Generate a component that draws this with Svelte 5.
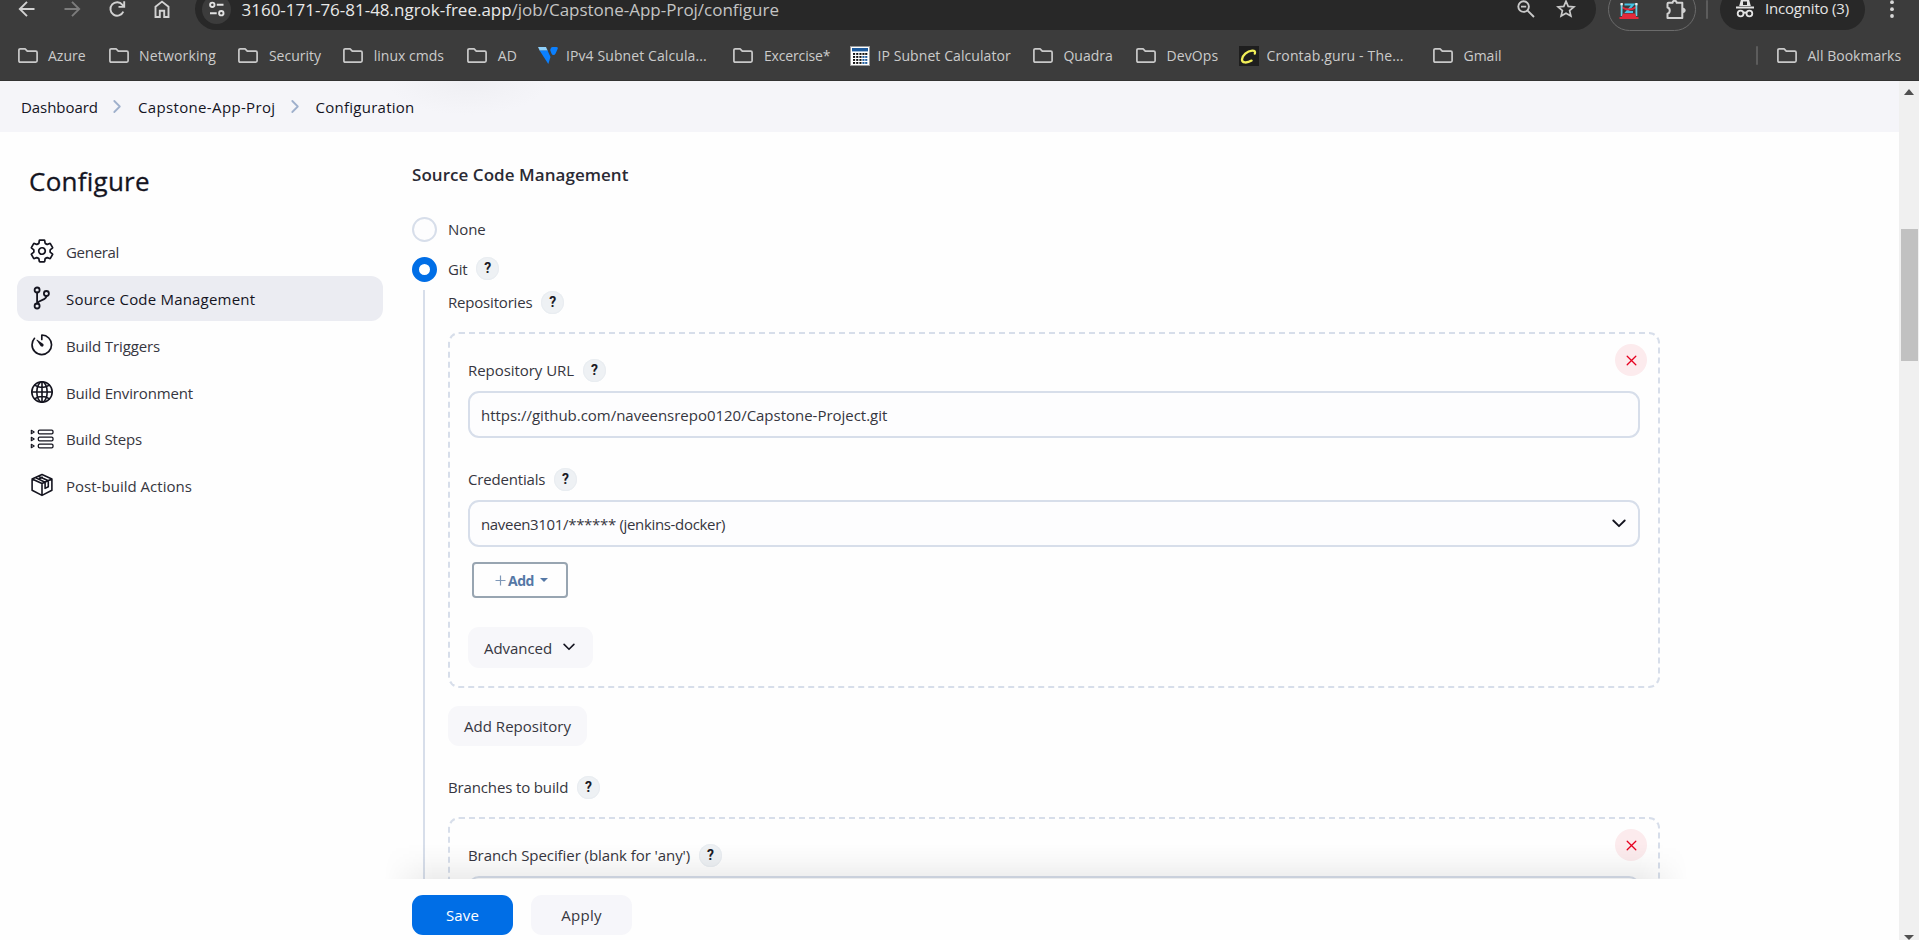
<script>
  const bookmarks = [
    { label: 'Azure', icon: 'folder', width: 91.1, spacing: 0 },
    { label: 'Networking', icon: 'folder', width: 129.8, spacing: 0.15 },
    { label: 'Security', icon: 'folder', width: 104.9, spacing: 0 },
    { label: 'linux cmds', icon: 'folder', width: 124, spacing: 0 },
    { label: 'AD', icon: 'folder', width: 71.2, spacing: 0 },
    { label: 'IPv4 Subnet Calcula...', icon: 'vercara', width: 195, spacing: 0.1, gap: 7.5 },
    { label: 'Excercise*', icon: 'folder', width: 116.5, spacing: -0.15 },
    { label: 'IP Subnet Calculator', icon: 'calculator', width: 183, spacing: 0.08, gap: 7.5 },
    { label: 'Quadra', icon: 'folder', width: 103, spacing: 0 },
    { label: 'DevOps', icon: 'folder', width: 103, spacing: 0.1 },
    { label: 'Crontab.guru - The...', icon: 'crontab', width: 194, spacing: 0.15, gap: 7.5 },
    { label: 'Gmail', icon: 'folder', width: 80, spacing: 0 }
  ];

  const sections = [
    { label: 'General', icon: 'gear', spacing: -0.3 },
    { label: 'Source Code Management', icon: 'branch', spacing: 0.2, active: true },
    { label: 'Build Triggers', icon: 'timer', spacing: -0.12 },
    { label: 'Build Environment', icon: 'globe', spacing: -0.15 },
    { label: 'Build Steps', icon: 'steps', spacing: -0.17 },
    { label: 'Post-build Actions', icon: 'package', spacing: 0.02 }
  ];

  const crumbs = [
    { label: 'Dashboard', spacing: -0.05 },
    { label: 'Capstone-App-Proj', spacing: 0.35 },
    { label: 'Configuration', spacing: 0.26 }
  ];

  let scm = $state('git');
</script>

{#snippet label(text, spacing)}
  <span class="label" style:letter-spacing="{spacing}px">{text}</span>
{/snippet}

{#snippet field(text, spacing)}
  <div class="field-label">
    {@render label(text, spacing)}
    <button class="help">?</button>
  </div>
{/snippet}

{#snippet chevron(w, h)}
  <svg width={w} height={h} viewBox="0 0 13 8" fill="none" stroke="#14141f" stroke-width="1.7" stroke-linecap="round" stroke-linejoin="round"><path d="M1.2 1.2 6.5 6.5l5.3-5.3" /></svg>
{/snippet}

{#snippet remove()}
  <button class="remove" aria-label="Delete">
    <svg width="11" height="11" viewBox="0 0 11 11" fill="none" stroke="#e6001f" stroke-width="1.3" stroke-linecap="round"><path d="M1.2 1.2l8.6 8.6M9.8 1.2 1.2 9.8" /></svg>
  </button>
{/snippet}

{#snippet bookmarkIcon(kind)}
  {#if kind === 'folder'}
    <svg width="20" height="15" viewBox="0 0 20 15" fill="none" stroke="#c9c9c9" stroke-width="1.7" stroke-linejoin="round"><path d="M.9 2.2q0-1.3 1.3-1.3h4.9l2.2 2.3h8.5q1.3 0 1.3 1.3v8.3q0 1.3-1.3 1.3H2.2q-1.3 0-1.3-1.3z" /></svg>
  {:else if kind === 'vercara'}
    <svg width="20" height="19" viewBox="0 0 20 19"><path fill="#8ed0fb" d="M0 1h8l1.7 3.8H1.8z" /><path fill="#0b80ff" d="M1.6 4.4h8l2.9 6.6-2.2 7z" /><path fill="#0b80ff" d="M12.7 2.4Q13.3 1 14.8 1h3.4q2.2 0 1.4 2l-2 4.5q-.8 1.6-2.2 1.6-1.2 0-1.8-1.3l-1.2-3q-.3-1.2.3-2.4z" /></svg>
  {:else if kind === 'calculator'}
    <svg width="20" height="20" viewBox="0 0 20 20">
      <rect width="20" height="20" fill="#989898" /><rect x="1" y="1" width="18" height="18" fill="#fff" />
      <rect x="2" y="2" width="16" height="3.4" fill="#1d5a9c" />
      {#each [7, 10, 13, 16] as y}
        {#each [3, 6.2, 9.4, 12.4, 15.2] as x}<rect {x} {y} width="2.1" height="1.9" fill={x > 12 && y > 7 ? '#1d5a9c' : '#111'} />{/each}
      {/each}
    </svg>
  {:else}
    <svg width="20" height="20" viewBox="0 0 20 20"><rect width="20" height="20" fill="#1e1e1e" /><path d="M15.8 7.6q1.1-3.2-2.6-3C8 5 3.4 9.5 3 13.4c-.3 3.8 5 4 9.6 1.2" fill="none" stroke="#f2ef58" stroke-width="2.3" stroke-linecap="round" /></svg>
  {/if}
{/snippet}

{#snippet sectionIcon(kind)}
  {#if kind === 'gear'}
    <svg width="24" height="24" viewBox="20 20 472 472" class="line" stroke-width="34"><path d="M262.29 192.31a64 64 0 1057.4 57.4 64.13 64.13 0 00-57.4-57.4zM416.39 256a154.34 154.34 0 01-1.53 20.79l45.21 35.46a10.81 10.81 0 012.45 13.75l-42.77 74a10.81 10.81 0 01-13.14 4.59l-44.9-18.08a16.11 16.11 0 00-15.17 1.75A164.48 164.48 0 01325 400.8a15.94 15.94 0 00-8.82 12.14l-6.73 47.89a11.08 11.08 0 01-10.68 9.17h-85.54a11.11 11.11 0 01-10.69-8.87l-6.72-47.82a16.07 16.07 0 00-9-12.22 155.3 155.3 0 01-21.46-12.57 16 16 0 00-15.11-1.71l-44.89 18.07a10.81 10.81 0 01-13.14-4.58l-42.77-74a10.8 10.8 0 012.45-13.75l38.21-30a16.05 16.05 0 006-14.08c-.36-4.17-.58-8.33-.58-12.5s.21-8.27.58-12.35a16 16 0 00-6.07-13.94l-38.19-30A10.81 10.81 0 0149.48 186l42.77-74a10.81 10.81 0 0113.14-4.59l44.9 18.08a16.11 16.11 0 0015.17-1.75A164.48 164.48 0 01187 111.2a15.94 15.94 0 008.82-12.14l6.73-47.89A11.08 11.08 0 01213.23 42h85.54a11.11 11.11 0 0110.69 8.87l6.72 47.82a16.07 16.07 0 009 12.22 155.3 155.3 0 0121.46 12.57 16 16 0 0015.11 1.71l44.89-18.07a10.81 10.81 0 0113.14 4.58l42.77 74a10.8 10.8 0 01-2.45 13.75l-38.21 30a16.05 16.05 0 00-6.05 14.08c.33 4.14.55 8.3.55 12.47z" /></svg>
  {:else if kind === 'branch'}
    <svg width="24" height="24" viewBox="0 0 24 24" class="line" stroke-width="1.8"><circle cx="7.1" cy="4" r="2.5" /><circle cx="7.1" cy="20" r="2.5" /><circle cx="16.400" cy="7.5" r="2.5" /><path d="M7.1 6.500v11M16.400 10c0 4.500-7.300 3.500-9.100 7.300" /></svg>
  {:else if kind === 'timer'}
    <svg width="24" height="24" viewBox="24 24 472 472"><path class="line" stroke-width="33" d="M112.91 128A191.85 191.85 0 0064 254c-1.18 106.35 85.65 193.8 192 194 106.2.2 192-85.83 192-192 0-104.54-83.55-189.61-187.5-192a4.36 4.36 0 00-4.5 4.37V152" /><path fill="#14141f" d="M233.38 278.63l-79-113a8.13 8.13 0 0111.32-11.32l113 79a32.5 32.5 0 01-37.25 53.26 33.21 33.21 0 01-8.07-7.94z" /></svg>
  {:else if kind === 'globe'}
    <svg width="24" height="24" viewBox="0 0 24 24" class="line" stroke-width="1.6"><circle cx="12" cy="12" r="10.2" /><ellipse cx="12" cy="12" rx="5.2" ry="10.2" /><path d="M12 1.8v20.4M1.8 12h20.4M4.6 5.2c4.3 3 10.5 3 14.8 0M4.6 18.8c4.3-3 10.5-3 14.8 0" /></svg>
  {:else if kind === 'steps'}
    <svg width="24" height="24" viewBox="0 0 24 24" class="line" stroke-width="1.3">
      {#each [5, 12, 19] as y}
        <rect x="8.3" y={y - 1.8} width="14.7" height="3.6" rx="1.3" /><path d="M1.3 {y - 1.7}v3.4l2.9-1.7z" stroke-width="1.1" />
      {/each}
    </svg>
  {:else}
    <svg width="24" height="24" viewBox="0 0 24 24" class="line" stroke-width="1.6"><path d="M12 1.6 21.9 6v11.3L12 22.400l-9.900-5.100V6zM2.100 6 12 10.600 21.900 6M12 10.600v11.600M5.300 4.600l9.800 4.700v6.100l3.200-1.600V7.700L8.600 3.200M9.300 5.800l3-1.500" /></svg>
  {/if}
{/snippet}

<div class="window">
  <header class="chrome">
    <div class="toolbar">
      <nav class="nav">
        <svg viewBox="0 0 20 20" fill="none" stroke="#d2d2d2" stroke-width="1.9"><path d="M17.5 10H3.5M10 2.8 2.8 10l7.2 7.2" /></svg>
        <svg viewBox="0 0 20 20" fill="none" stroke="#7c7c7c" stroke-width="1.9"><path d="M2.5 10h14M10 2.8l7.2 7.2-7.2 7.2" /></svg>
        <svg viewBox="0 0 20 20" fill="none" stroke="#d2d2d2" stroke-width="1.9"><path d="M16.3 12.6A6.7 6.7 0 1 1 15.4 5.8L17 7.6M17.2 2.3V7.9H11.5" /></svg>
        <svg viewBox="0 0 20 20" fill="none" stroke="#d2d2d2" stroke-width="1.9"><path d="M3.5 18V7.8L10 2.6l6.5 5.2V18h-4.3v-6.200H7.800V18z" /></svg>
      </nav>
      <div class="omnibox">
        <span class="site">
          <svg width="18" height="18" viewBox="0 0 18 18" fill="none" stroke="#e2e2e2" stroke-width="1.9"><circle cx="4.3" cy="4.8" r="2.2" /><path d="M8.8 4.8h6.7M2 13.2h6.7" /><circle cx="13.3" cy="13.2" r="2.2" /></svg>
        </span>
        <span class="url"><b>3160-171-76-81-48.ngrok-free.app</b>/job/Capstone-App-Proj/configure</span>
        <svg class="zoom" width="20" height="20" viewBox="0 0 20 20" fill="none" stroke="#c9c9c9" stroke-width="1.9"><circle cx="7.6" cy="7.6" r="5.3" /><path d="m11.6 11.6 6.4 6.4M5 7.6h5.2" /></svg>
        <svg width="20" height="20" viewBox="0 0 20 20" fill="none" stroke="#c9c9c9" stroke-width="1.7"><path d="m10 2.2 2.200 5.200 5.700.5-4.300 3.700 1.300 5.500L10 14.200l-4.900 2.900 1.300-5.500L2.100 7.900l5.700-.5z" /></svg>
      </div>
      <div class="extensions">
        <svg width="20" height="20" viewBox="0 0 20 20" fill="none"><path stroke="#43c3e6" stroke-width="2" d="M5.5 4.5h8.7L7.5 12H14" /><path stroke="#e3293b" stroke-width="1.8" d="M2.5 7q7.5 5 15 0" /><path stroke="#67d0e8" stroke-width="1.8" d="M2.6 4v12M17.400 4v12" /><path fill="#e3293b" d="M4 13.5h12l1.5 4H2.5z" /><path stroke="#e3293b" stroke-width="2" d="M.5 18h19" /><path fill="#eee" d="M1.5 3h2.3v2.300H1.500zM16.200 3h2.300v2.300h-2.300z" /></svg>
        <svg width="22" height="22" viewBox="0 0 22 22" fill="none" stroke="#d2d2d2" stroke-width="2" stroke-linejoin="round"><path d="M3.5 3.8h4c.4-2.800 3.800-2.800 4.200 0h5.600V19H2.500v-4.200c3-.6 3-5.800 0-6.400V4.800q0-1 1-1z" /><path fill="#d2d2d2" stroke="none" d="M18 8.800c3.600.3 3.600 4.900 0 5.200z" /></svg>
      </div>
      <i class="rule"></i>
      <div class="incognito">
        <svg width="20" height="21" viewBox="0 0 20 21"><path fill="#e4e4e4" d="M6.300 1.200 10 2l3.700-.8L15.800 9H4.200zM1 9.500h18v2H1z" /><path fill="#282828" d="M8 4.500h4v3.500H8z" /><g fill="none" stroke="#e4e4e4" stroke-width="1.8"><circle cx="5.6" cy="16.5" r="2.9" /><circle cx="14.4" cy="16.5" r="2.9" /><path d="M8.300 16q1.700-1 3.400 0" /></g></svg>
        <span>Incognito (3)</span>
      </div>
      <svg class="dots" width="6" height="20" viewBox="0 0 6 20" fill="#d8d8d8"><circle cx="3" cy="3.2" r="1.9" /><circle cx="3" cy="10.2" r="1.9" /><circle cx="3" cy="17" r="1.9" /></svg>
    </div>
    <div class="bookmarks">
      {#each bookmarks as b}
        <a class="bookmark" href="#top" style:width="{b.width}px" style:column-gap="{b.gap ?? 10.5}px">
          {@render bookmarkIcon(b.icon)}{@render label(b.label, b.spacing)}
        </a>
      {/each}
      <i class="rule"></i>
      <a class="bookmark all" href="#top">{@render bookmarkIcon('folder')}{@render label('All Bookmarks', 0.03)}</a>
    </div>
  </header>

  <div class="viewport">
    <div class="page">
      <nav class="crumbs">
        {#each crumbs as c, i}
          {#if i}<svg width="9" height="15" viewBox="0 0 9 15" fill="none" stroke="#9fb0cc" stroke-width="1.8" stroke-linecap="round" stroke-linejoin="round"><path d="m1.3 2 5.5 5.5-5.5 5.5" /></svg>{/if}
          {@render label(c.label, c.spacing)}
        {/each}
      </nav>

      <div class="columns">
        <aside class="side">
          <h1>Configure</h1>
          {#each sections as s}
            <a class="section" class:active={s.active} href="#top">
              {@render sectionIcon(s.icon)}{@render label(s.label, s.spacing)}
            </a>
          {/each}
        </aside>

        <main class="form">
          <h2>Source Code Management</h2>
          <div class="choice">
            <button class="radio" class:on={scm === 'none'} aria-label="None" onclick={() => (scm = 'none')}></button>
            {@render label('None', -0.05)}
          </div>
          <div class="choice git">
            <button class="radio" class:on={scm === 'git'} aria-label="Git" onclick={() => (scm = 'git')}></button>
            {@render label('Git', -0.18)}
            <button class="help">?</button>
          </div>

          <div class="nested">
            {@render field('Repositories', -0.19)}
            <section class="chunk">
              {@render remove()}
              {@render field('Repository URL', -0.05)}
              <div class="input">{@render label('https://github.com/naveensrepo0120/Capstone-Project.git', -0.02)}</div>
              <div class="second">{@render field('Credentials', -0.18)}</div>
              <div class="input">{@render label('naveen3101/****** (jenkins-docker)', -0.33)}{@render chevron(14, 9)}</div>
              <button class="add">
                <svg width="11" height="11" viewBox="0 0 11 11" stroke="#7f98b8" stroke-width="1.2"><path d="M5.5.5v10M.5 5.5h10" /></svg>
                <span>Add</span>
                <i class="caret"></i>
              </button>
              <button class="soft advanced">{@render label('Advanced', -0.06)}{@render chevron(12, 8)}</button>
            </section>
            <button class="soft repo">{@render label('Add Repository', 0.03)}</button>
            {@render field('Branches to build', -0.14)}
            <section class="chunk">
              {@render remove()}
              {@render field("Branch Specifier (blank for 'any')", -0.07)}
              <div class="input"></div>
            </section>
          </div>
        </main>
      </div>

      <footer class="actions">
        <button class="save">Save</button>
        <button class="apply">Apply</button>
      </footer>
    </div>

    <div class="scrollbar">
      <i class="up"></i>
      <i class="thumb"></i>
      <i class="down"></i>
    </div>
  </div>
</div>

<style>
  :global(body) { overflow: hidden; }
  * { box-sizing: border-box; }
  .window {
    display: flex; flex-direction: column; width: 1919px; height: 940px; overflow: hidden;
    background: #fefefe; color: #363640; font: 400 15px/20px "Open Sans", "Noto Sans", sans-serif;
  }
  button { appearance: none; border: 0; margin: 0; padding: 0; background: none; color: inherit; font: inherit; cursor: pointer; }
  a { color: inherit; text-decoration: none; }
  svg { flex: none; display: block; }
  .label { white-space: nowrap; }
  .line { fill: none; stroke: #14141f; stroke-linecap: round; stroke-linejoin: round; }

  .chrome { display: flex; flex-direction: column; flex: none; height: 81px; overflow: hidden; background: #3c3c3c; border-bottom: 1px solid #333; }
  .toolbar { display: flex; flex: none; align-items: center; height: 42px; margin-top: -12px; padding-left: 17px; }
  .nav { display: flex; gap: 25px; width: 178px; }
  .nav svg { width: 20px; height: 20px; }
  .omnibox { display: flex; align-items: center; width: 1401px; height: 42px; padding: 0 20px 0 7px; border-radius: 21px; background: #282828; }
  .site { display: grid; place-items: center; width: 29px; height: 29px; margin-right: 10.5px; border-radius: 50%; background: #3c3c3c; }
  .url { flex: 1; padding-top: 2px; color: #c4c4c4; font-size: 17px; line-height: 18px; letter-spacing: -0.01px; white-space: nowrap; }
  .url b { color: #e8e8e8; font-weight: 400; }
  .zoom { margin-right: 20px; }
  .extensions { display: flex; align-items: center; justify-content: space-between; width: 88px; height: 43px; margin: 1px 0 0 12px; padding: 0 8px 0 10px; border: 1.5px solid #6b6b6b; border-radius: 22px; }
  .rule { flex: none; width: 2px; height: 19px; background: #5c5c5c; border-radius: 1px; }
  .toolbar .rule { margin-left: 10px; }
  .incognito { display: flex; align-items: center; gap: 10px; width: 145px; height: 41px; margin-left: 12px; padding-left: 15px; border-radius: 21px; background: #282828; color: #e4e4e4; letter-spacing: -0.19px; white-space: nowrap; }
  .incognito svg { margin-top: -4px; }
  .incognito span { margin-top: -2px; }
  .dots { margin-left: 24px; }
  .bookmarks { display: flex; align-items: center; height: 50px; padding: 1px 0 0 17.5px; color: #cbcbcb; font-size: 14px; }
  .bookmark { display: flex; flex: none; align-items: center; height: 22px; }
  .bookmark .label { padding-top: 1px; }
  .bookmarks .rule { margin-left: 243px; }
  .all { margin-left: 19px; column-gap: 10.5px; }

  .viewport { display: flex; flex: 1; min-height: 0; }
  .page { display: flex; flex: none; flex-direction: column; width: 1899px; }
  .crumbs { display: flex; flex: none; align-items: center; gap: 15.5px; height: 51px; padding-left: 21px; color: #14141f; font-weight: 500; background: radial-gradient(ellipse 80px 34px at 468px 0, #efeff3, transparent), #f5f5f9; }
  .columns { display: flex; flex: 1; min-height: 0; overflow: hidden; }
  .side { display: flex; flex: none; flex-direction: column; gap: 1.8px; width: 366px; margin-left: 17px; }
  h1 { margin: 34px 0 31.2px 12px; color: #14141f; font-size: 26px; line-height: 30px; font-weight: 500; letter-spacing: 0.25px; -webkit-text-stroke: 0.3px #14141f; }
  .section { display: flex; flex: none; align-items: center; gap: 12.5px; height: 45px; padding-left: 12.5px; border-radius: 12px; }
  .section .label { padding-top: 1.4px; }
  .section.active { background: #ebecf2; color: #14141f; font-weight: 500; }

  .form { flex: none; width: 1248px; margin-left: 29px; padding-top: 28px; }
  h2 { margin: 0 0 27px; color: #2a2a34; font-size: 17px; line-height: 30px; font-weight: 600; letter-spacing: 0.05px; }
  .choice { display: flex; align-items: center; height: 25px; }
  .choice .label { margin-top: -1px; }
  .choice.git { margin-top: 15px; }
  .radio { width: 25px; height: 25px; margin-right: 11px; border: 2px solid #d7deea; border-radius: 50%; background: #fdfdfe; }
  .radio.on { border: 7px solid #006ee6; background: #fff; }
  .choice.git .radio { margin-top: -1px; }
  .help { display: grid; flex: none; place-items: center; width: 23px; height: 23px; margin-left: 8.8px; border-radius: 50%; background: #eef1f4; color: #1c1c26; font: 700 14px/22px Roboto, sans-serif; padding-bottom: 1px; box-shadow: inset 0 0 0 1px #e9edf1; }
  .choice .help { margin-top: -2px; }
  .nested { margin: 8px 0 0 11px; padding: 1px 0 0 23px; border-left: 2px solid #d7deea; }
  .field-label { display: flex; align-items: center; height: 23px; }
  .field-label .label { margin-top: -1px; }
  .chunk { position: relative; height: 356px; margin-top: 18px; padding: 25px 18px 0; border: 2px dashed #d7deea; border-radius: 11px; }
  .remove { position: absolute; top: 10px; right: 11px; display: grid; place-items: center; width: 32px; height: 32px; border-radius: 50%; background: #fcebed; }
  .input { display: flex; align-items: center; justify-content: space-between; height: 47px; margin-top: 9px; padding: 0 12.5px 0 11px; border: 2px solid #d7deea; border-radius: 11px; background: #fdfdfe; }
  .second { margin-top: 30px; }
  .add { display: flex; align-items: center; width: 96px; height: 36px; margin: 15px 0 0 4px; padding-left: 20.5px; border: 2px solid #98a5b1; border-radius: 4px; color: #5578a6; font-size: 14px; font-weight: 700; letter-spacing: -0.46px; }
  .add span { margin: 2px 6px 0 2.5px; }
  .caret { border: 4px solid transparent; border-top-color: #5578a6; border-bottom: 0; }
  .soft { display: flex; align-items: center; border-radius: 11px; background: #f7f7fa; }
  .advanced { gap: 11px; width: 125px; height: 41px; margin-top: 29px; padding-left: 16px; }
  .advanced svg { margin-top: -2px; }
  .repo { width: 139px; height: 40px; margin: 18px 0 30px; padding-left: 16px; }

  .actions { display: flex; position: relative; flex: none; gap: 18px; height: 61px; padding: 16px 0 0 412px; background: #fefefe; }
  .actions::before { content: ""; position: absolute; left: 384px; right: 211px; bottom: 100%; height: 40px; background: linear-gradient(to top, rgba(0, 0, 0, 0.065), rgba(0, 0, 0, 0.022) 45%, transparent 90%); mask-image: linear-gradient(to right, transparent, #000 50px, #000 calc(100% - 50px), transparent); }
  .actions button { width: 101px; height: 40px; border-radius: 11px; }
  .save { background: #006ee6; color: #fff; font-weight: 500; letter-spacing: 0.13px; }
  .apply { background: #f6f6fa; letter-spacing: 0.27px; }

  .scrollbar { display: flex; flex: none; flex-direction: column; align-items: center; width: 20px; background: #f0f0f0; }
  .up { margin-top: 8px; border: 5px solid transparent; border-bottom: 6px solid #505050; border-top: 0; }
  .thumb { width: 17px; height: 133px; margin-top: 134px; background: #c1c1c1; }
  .down { margin-top: 574px; border: 5px solid transparent; border-top: 5px solid #505050; border-bottom: 0; }
</style>
